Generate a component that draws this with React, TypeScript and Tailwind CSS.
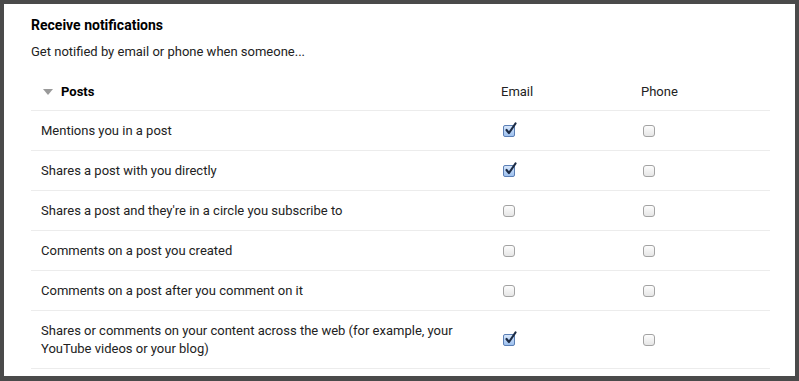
import { ReactNode } from "react";

interface RowProps {
  label: ReactNode;
  email: boolean;
  phone: boolean;
  tall?: boolean;
}

function Box({ checked }: { checked: boolean }) {
  if (checked) {
    return (
      <span className="relative inline-block w-[12px] h-[12px] rounded-[2px] border border-[#5b7fb5] bg-gradient-to-b from-[#d6e6fb] to-[#9dc0ee]">
        <svg
          className="absolute left-[0px] top-[-4px]"
          width="14"
          height="14"
          viewBox="0 0 14 14"
        >
          <path
            d="M2.5 8 L5 11 L11.5 1.5"
            fill="none"
            stroke="#1b2b45"
            strokeWidth="2.2"
            strokeLinecap="round"
            strokeLinejoin="round"
          />
        </svg>
      </span>
    );
  }
  return (
    <span className="inline-block w-[12px] h-[12px] rounded-[3px] border border-[#a3a3a3] bg-gradient-to-b from-[#fdfdfd] to-[#e6e6e6]" />
  );
}

function Row({ label, email, phone, tall }: RowProps) {
  return (
    <div
      className={`grid grid-cols-[470px_140px_1fr] items-center border-b border-[#ececec] ${
        tall ? "h-[58px]" : "h-[40px]"
      }`}
    >
      <div className="pl-[10px] leading-[18px]">{label}</div>
      <div className="pl-[2px] flex">
        <Box checked={email} />
      </div>
      <div className="pl-[2px] flex">
        <Box checked={phone} />
      </div>
    </div>
  );
}

export default function App() {
  return (
    <div className="w-[799px] h-[381px] bg-[#4a4a4a] pt-[4px] pl-[4px] pr-[4px] pb-[5px] font-['Roboto',sans-serif] text-[13px] text-[#222]">
      <div className="w-full h-full bg-white pl-[27px]">
        <h2 className="pt-[12px] text-[14px] font-bold text-black leading-[18px]">
          Receive notifications
        </h2>
        <p className="mt-[9px] leading-[18px]">
          Get notified by email or phone when someone...
        </p>
        <div className="w-[739px] mt-[11px]">
          <div className="grid grid-cols-[470px_140px_1fr] items-center h-[39px] pt-[2px] border-b border-[#ececec]">
            <div className="flex items-center gap-[8px] pl-[12px]">
              <svg width="10" height="6" viewBox="0 0 10 6">
                <path d="M0 0 H10 L5 6 Z" fill="#9a9a9a" />
              </svg>
              <span className="font-bold text-black">Posts</span>
            </div>
            <div>Email</div>
            <div>Phone</div>
          </div>
          <Row label="Mentions you in a post" email={true} phone={false} />
          <Row label="Shares a post with you directly" email={true} phone={false} />
          <Row
            label="Shares a post and they're in a circle you subscribe to"
            email={false}
            phone={false}
          />
          <Row label="Comments on a post you created" email={false} phone={false} />
          <Row
            label="Comments on a post after you comment on it"
            email={false}
            phone={false}
          />
          <Row
            label={
              <>
                Shares or comments on your content across the web (for example, your
                <br />
                YouTube videos or your blog)
              </>
            }
            email={true}
            phone={false}
            tall
          />
        </div>
      </div>
    </div>
  );
}
